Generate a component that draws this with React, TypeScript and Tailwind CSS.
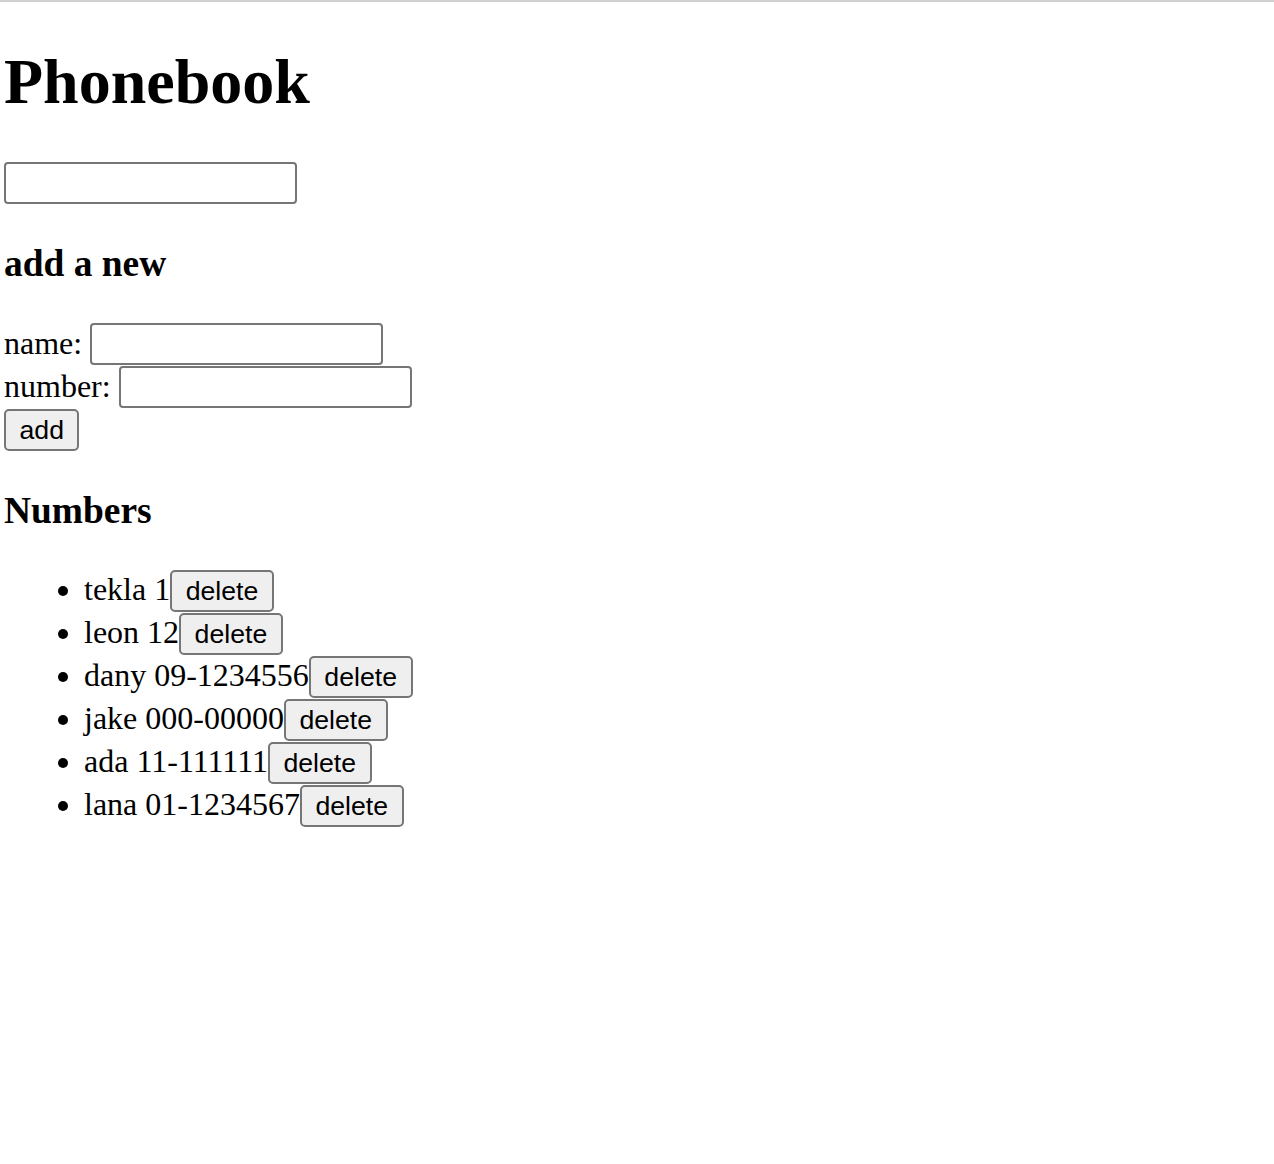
import { useState } from "react";

type Person = { name: string; number: string };

const initialPersons: Person[] = [
  { name: "tekla", number: "1" },
  { name: "leon", number: "12" },
  { name: "dany", number: "09-1234556" },
  { name: "jake", number: "000-00000" },
  { name: "ada", number: "11-111111" },
  { name: "lana", number: "01-1234567" },
];

const inputClass =
  "align-top h-[42px] w-[293px] rounded-[4px] border-2 border-[#767676] bg-white px-[4px] text-[26px] outline-none";
const buttonClass =
  "align-top h-[42px] rounded-[5px] border-2 border-[#767676] bg-[#efefef] px-[13.5px] text-[26.67px] leading-none text-black font-['Liberation_Sans',Arial,sans-serif]";

export default function App() {
  const [persons, setPersons] = useState<Person[]>(initialPersons);
  const [filter, setFilter] = useState("");
  const [newName, setNewName] = useState("");
  const [newNumber, setNewNumber] = useState("");

  const addPerson = (e: React.FormEvent) => {
    e.preventDefault();
    if (!newName) return;
    setPersons((prev) => [...prev, { name: newName, number: newNumber }]);
    setNewName("");
    setNewNumber("");
  };

  const deletePerson = (name: string) => {
    setPersons((prev) => prev.filter((p) => p.name !== name));
  };

  const shown = persons.filter((p) =>
    p.name.toLowerCase().includes(filter.toLowerCase())
  );

  return (
    <div className="min-h-screen bg-white text-black font-['Liberation_Serif','Times_New_Roman',serif]">
      <div className="h-[2px] bg-[#d0d0d0]" />
      <div className="pl-[4px]">
        <h1 className="mt-[43px] text-[64px] leading-[74px] font-bold">Phonebook</h1>

        <div className="mt-[43px] h-[43px]">
          <input
            className={inputClass}
            value={filter}
            onChange={(e) => setFilter(e.target.value)}
          />
        </div>

        <h3 className="mt-[37px] text-[37.44px] leading-[43px] font-bold">add a new</h3>

        <form onSubmit={addPerson} className="mt-[38px] text-[32px]">
          <div className="h-[43px] leading-[40px]">
            name:{" "}
            <input
              className={inputClass}
              value={newName}
              onChange={(e) => setNewName(e.target.value)}
            />
          </div>
          <div className="h-[43px] leading-[40px]">
            number:{" "}
            <input
              className={inputClass}
              value={newNumber}
              onChange={(e) => setNewNumber(e.target.value)}
            />
          </div>
          <div className="h-[43px]">
            <button type="submit" className={buttonClass}>
              add
            </button>
          </div>
        </form>

        <h3 className="mt-[37px] text-[37.44px] leading-[43px] font-bold">Numbers</h3>

        <ul className="mt-[38px] list-disc pl-[80px] text-[32px]">
          {shown.map((p) => (
            <li key={p.name} className="h-[43px] leading-[38px]">
              {p.name} {p.number}
              <button className={buttonClass} onClick={() => deletePerson(p.name)}>
                delete
              </button>
            </li>
          ))}
        </ul>
      </div>
    </div>
  );
}
